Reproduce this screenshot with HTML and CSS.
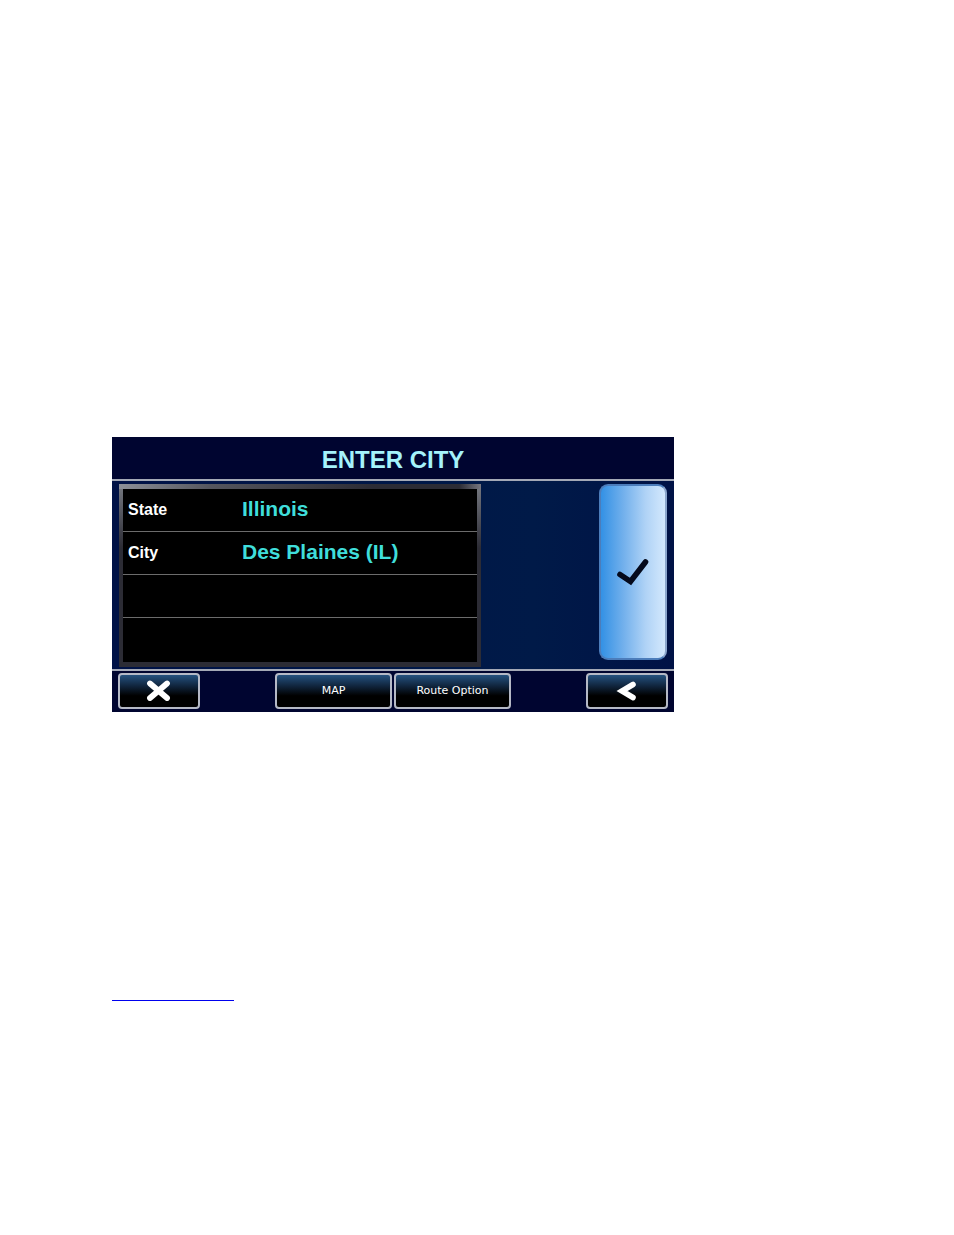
FILE: index.html
```
<!DOCTYPE html>
<html lang="en">

<head>
    <meta charset="UTF-8">
    <meta name="viewport" content="width=device-width, initial-scale=1.0">
    <title>Enter City</title>
    <link rel="stylesheet" href="styles.css">
</head>

<body>
    <main class="page">
        <section class="screen">
            <h1 class="title">ENTER CITY</h1>
            <div class="content">
                <div class="panel">
                    <table class="fields">
                        <tr>
                            <th scope="row">State</th>
                            <td>Illinois</td>
                        </tr>
                        <tr>
                            <th scope="row">City</th>
                            <td>Des Plaines (IL)</td>
                        </tr>
                        <tr>
                            <th></th>
                            <td></td>
                        </tr>
                        <tr>
                            <th></th>
                            <td></td>
                        </tr>
                    </table>
                </div>
                <button class="confirm" type="button" aria-label="Confirm">
                    <svg width="34" height="28" viewBox="0 0 34 28">
                        <path d="M4 16.5 L14.5 23.5 L29.5 4" fill="none" stroke="#050a1c" stroke-width="5.6" stroke-linecap="round" />
                    </svg>
                </button>
            </div>
            <div class="toolbar">
                <button class="btn small" type="button" aria-label="Close">
                    <svg width="26" height="24" viewBox="0 0 26 24">
                        <path d="M4 4.5 L21 19 M21 4.5 L4 19" fill="none" stroke="#fff" stroke-width="5.8" stroke-linecap="round" />
                    </svg>
                </button>
                <div class="middle">
                    <button class="btn" type="button">MAP</button>
                    <button class="btn" type="button">Route Option</button>
                </div>
                <button class="btn small" type="button" aria-label="Back">
                    <svg width="22" height="22" viewBox="0 0 22 22">
                        <path d="M17 4.5 L6 11 L17 17.5" fill="none" stroke="#fff" stroke-width="5.6" stroke-linecap="round" />
                    </svg>
                </button>
            </div>
        </section>
        <a class="link" href="#" aria-label="Link"></a>
    </main>
</body>

</html>
```

FILE: styles.css
```
body {
    font-family: "Liberation Sans", Arial, sans-serif;
    margin: 0;
    background-color: #fff;
}

.page {
    padding: 437px 112px 234px;
}

.screen {
    max-width: 562px;
    background-color: #000530;
}

.title {
    margin: 0;
    padding-top: 3px;
    border-bottom: 2px solid #a4a9b6;
    font-size: 24px;
    line-height: 39px;
    text-align: center;
    color: #a5f3fb;
}

.content {
    display: flex;
    justify-content: space-between;
    align-items: flex-start;
    padding: 3px 7px 2px;
    background: linear-gradient(to right, #001246, #001a48 75%, #001246);
}

.panel {
    flex: 0 1 354px;
    padding: 5px 4px;
    background: linear-gradient(to right, #8d9098, #55565e 25%, #2c2c35 70%, #2c2c35 94%, #777780) top / 100% 5px no-repeat,
        linear-gradient(#777a82, #2c2c35 35%) #2c2c35;
}

.fields {
    width: 100%;
    border-collapse: separate;
    border-spacing: 0;
    table-layout: fixed;
    background-color: #000;
}

.fields th,
.fields td {
    height: 42px;
    padding: 0;
    border-bottom: 1px solid #6c6c6c;
    text-align: left;
    font-weight: bold;
}

.fields th {
    width: 114px;
    padding-left: 5px;
    font-size: 16px;
    color: #fff;
}

.fields td {
    padding-bottom: 3px;
    height: 39px;
    font-size: 21px;
    line-height: 24px;
    color: #3fdedb;
}

.fields tr:last-child th,
.fields tr:last-child td {
    height: 44px;
    padding-bottom: 0;
    border-bottom: none;
}

.confirm {
    display: flex;
    align-items: center;
    justify-content: center;
    width: 68px;
    height: 176px;
    padding: 0;
    border: 2px solid #4c7dbb;
    border-right-color: #8aa5cc;
    border-radius: 9px;
    background: linear-gradient(to right, #3391e5, #72b0ec 35%, #b0d3f6 70%, #d3e8fd);
    cursor: pointer;
}

.toolbar {
    display: flex;
    justify-content: space-between;
    padding: 2px 6px 3px;
    border-top: 2px solid #a4a9b6;
}

.middle {
    display: flex;
    gap: 2px;
}

.btn {
    display: flex;
    align-items: center;
    justify-content: center;
    width: 117px;
    height: 36px;
    padding: 0 0 2px;
    border: 2px solid #b5b9c6;
    border-radius: 4px;
    background: linear-gradient(#24517f, #10243c 35%, #000 65%);
    font-family: "DejaVu Sans", Verdana, sans-serif;
    font-size: 11px;
    color: #fff;
    cursor: pointer;
}

.small {
    width: 82px;
    padding: 0;
}

.link {
    display: block;
    width: 122px;
    height: 20px;
    margin-top: 268px;
    border-bottom: 1px solid #0000ee;
}
```
